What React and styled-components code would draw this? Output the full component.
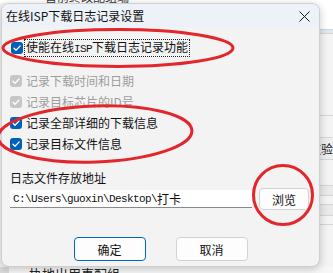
import styled, { createGlobalStyle } from 'styled-components';

const GlobalStyle = createGlobalStyle`
  html, body {
    margin: 0;
    padding: 0;
  }
  body {
    font-family: "Noto Sans CJK SC", "Noto Sans", sans-serif;
    font-size: 12px;
    color: #1a1a1a;
  }
  * {
    box-sizing: border-box;
  }
`;

const CJK = '"Noto Sans CJK SC", "Noto Sans", sans-serif';
const MONO = '"Liberation Mono", "DejaVu Sans Mono", monospace';

const OPTIONS = [
  { id: 'time', label: '记录下载时间和日期', checked: true, disabled: true },
  { id: 'chip', label: '记录目标芯片的ID号', checked: true, disabled: true },
  { id: 'detail', label: '记录全部详细的下载信息', checked: true },
  { id: 'file', label: '记录目标文件信息', checked: true },
];

const SIDE_ROWS = [
  { h: 27, bg: '#ffffff' },
  { h: 4, bg: '#dfe7ef' },
  { h: 82, bg: '#f4f4f4' },
  { h: 22, bg: '#f4f4f4', text: 's)' },
  { h: 22, bg: '#eeeeee', text: '效验' },
  { h: 26, bg: '#f4f4f4' },
  { h: 10, bg: '#eaeaea' },
  { h: 9, bg: '#f4f4f4' },
  { h: 11, bg: '#eaeaea' },
  { h: 9, bg: '#f4f4f4' },
];

function Check({ disabled }) {
  return (
    <CheckBox $disabled={disabled}>
      <svg width="12" height="12" viewBox="0 0 12 12">
        <path
          d="M3 6.3 L5 8.3 L9.2 3.9"
          fill="none"
          stroke="#ffffff"
          strokeWidth="1.3"
          strokeLinecap="round"
          strokeLinejoin="round"
        />
      </svg>
    </CheckBox>
  );
}

export default function App() {
  return (
    <Screen>
      <GlobalStyle />

      <Backdrop>
        <TopStrip>
          <span>暂前终改配组端</span>
        </TopStrip>
        <Middle>
          <Spacer />
          <SideStrip>
            {SIDE_ROWS.map((row, i) => (
              <SideRow key={i} style={{ height: row.h, background: row.bg }}>
                {row.text}
              </SideRow>
            ))}
          </SideStrip>
        </Middle>
        <BottomStrip>
          <span>执地出用事配组</span>
        </BottomStrip>
      </Backdrop>

      <Dialog>
        <TitleBar>
          <Title>在线ISP下载日志记录设置</Title>
          <CloseButton>
            <svg width="11" height="11" viewBox="0 0 11 11">
              <path d="M0.5 0.5 L10.5 10.5 M10.5 0.5 L0.5 10.5" stroke="#1a1a1a" strokeWidth="1" />
            </svg>
          </CloseButton>
        </TitleBar>

        <Body>
          <MainRow>
            <Check />
            <FocusLabel>
              使能在线<Latin>ISP</Latin>下载日志记录功能
            </FocusLabel>
          </MainRow>

          <OptionList>
            {OPTIONS.map((opt) => (
              <OptionRow key={opt.id}>
                <Check disabled={opt.disabled} />
                <OptionLabel $disabled={opt.disabled}>{opt.label}</OptionLabel>
              </OptionRow>
            ))}
          </OptionList>

          <FieldLabel>日志文件存放地址</FieldLabel>
          <PathRow>
            <PathInput>
              <Latin>C:\Users\guoxin\Desktop\</Latin>打卡
            </PathInput>
            <Button $w={50} $h={22}>浏览</Button>
          </PathRow>

          <Footer>
            <Button $primary>确定</Button>
            <Button>取消</Button>
          </Footer>
        </Body>
      </Dialog>

      <Marks width="333" height="273" viewBox="0 0 333 273">
        <ellipse cx="118" cy="48" rx="115" ry="18.5" fill="none" stroke="#e3262b" strokeWidth="3" />
        <ellipse
          cx="95"
          cy="134"
          rx="97"
          ry="28"
          fill="none"
          stroke="#e3262b"
          strokeWidth="3"
          transform="rotate(-2 95 134)"
        />
        <ellipse cx="283" cy="195" rx="29.5" ry="29.5" fill="none" stroke="#e3262b" strokeWidth="3" />
      </Marks>
    </Screen>
  );
}

const Screen = styled.div`
  position: relative;
  width: 333px;
  height: 273px;
  overflow: hidden;
  background: #f4f4f4;
`;

const Backdrop = styled.div`
  display: flex;
  flex-direction: column;
  width: 333px;
  height: 273px;
`;

const TopStrip = styled.div`
  height: 3px;
  overflow: hidden;
  background: #ffffff;
  padding-left: 45px;

  span {
    display: block;
    margin-top: -9px;
    line-height: 12px;
    font-size: 12px;
    color: #333333;
  }
`;

const Middle = styled.div`
  flex: 1;
  display: flex;
`;

const Spacer = styled.div`
  width: 320px;
`;

const SideStrip = styled.div`
  flex: 1;
  display: flex;
  flex-direction: column;
`;

const SideRow = styled.div`
  display: flex;
  align-items: center;
  border-bottom: 1px solid #d6d6d6;
  font-size: 12px;
  white-space: nowrap;
  color: #222222;
  overflow: hidden;
`;

const BottomStrip = styled.div`
  height: 6px;
  overflow: hidden;
  background: #f7f7f7;
  padding-left: 20px;
  border-left: 9px solid #dadada;

  span {
    display: block;
    line-height: 14px;
    font-size: 13px;
    color: #222222;
  }
`;

const Dialog = styled.div`
  position: absolute;
  left: 1px;
  top: 3px;
  width: 319px;
  height: 264px;
  display: flex;
  flex-direction: column;
  background: #f3f3f3;
  border: 1px solid #cfcfcf;
  border-radius: 8px;
  overflow: hidden;
  box-shadow: 0 2px 8px rgba(0, 0, 0, 0.22);
`;

const TitleBar = styled.div`
  height: 23px;
  display: flex;
  align-items: center;
  justify-content: space-between;
  padding: 0 9px 0 4px;
  background: #edf2f9;
`;

const Title = styled.div`
  font-family: ${CJK};
  font-size: 12px;
  line-height: 16px;
  color: #111111;
`;

const CloseButton = styled.div`
  display: flex;
  align-items: center;
  margin-top: 2px;
`;

const Body = styled.div`
  display: flex;
  flex-direction: column;
  padding: 10px 8px 0 8px;
`;

const MainRow = styled.div`
  height: 21px;
  display: flex;
  align-items: center;
  gap: 2px;
  padding-left: 1px;
`;

const CheckBox = styled.div`
  width: 12px;
  height: 12px;
  flex: none;
  border-radius: 3px;
  display: flex;
  align-items: center;
  justify-content: center;
  background: ${({ $disabled }) => ($disabled ? '#c6c6c6' : '#005fb8')};
`;

const FocusLabel = styled.div`
  font-family: ${CJK};
  font-size: 12px;
  line-height: 13px;
  padding: 0 1px;
  color: #111111;
  outline: 1px dotted #222222;
`;

const Latin = styled.span`
  font-family: ${MONO};
  font-size: 11px;
  letter-spacing: -0.6px;
`;

const OptionList = styled.div`
  display: flex;
  flex-direction: column;
  margin-top: 12px;
`;

const OptionRow = styled.div`
  height: 21px;
  display: flex;
  align-items: center;
  gap: 4px;
`;

const OptionLabel = styled.div`
  font-family: ${CJK};
  font-size: 12px;
  line-height: 16px;
  color: ${({ $disabled }) => ($disabled ? '#9d9d9d' : '#111111')};
`;

const FieldLabel = styled.div`
  margin-top: 16px;
  font-family: ${CJK};
  font-size: 12px;
  line-height: 16px;
  color: #111111;
`;

const PathRow = styled.div`
  margin-top: 2px;
  display: flex;
  align-items: center;
  gap: 7px;
`;

const PathInput = styled.div`
  width: 242px;
  height: 18px;
  display: flex;
  align-items: center;
  padding-left: 3px;
  background: #ffffff;
  border-bottom: 1px solid #8a8a8a;
  border-radius: 2px 2px 0 0;
  font-family: ${CJK};
  font-size: 12px;
  color: #111111;
  white-space: nowrap;
`;

const Button = styled.div`
  width: ${({ $w }) => $w || 72}px;
  height: ${({ $h }) => $h || 24}px;
  display: flex;
  align-items: center;
  justify-content: center;
  background: #fdfdfd;
  border: ${({ $primary }) => ($primary ? '1.5px solid #0067c0' : '1px solid #d2d2d2')};
  border-radius: 4px;
  font-family: ${CJK};
  font-size: 12px;
  color: #111111;
`;

const Footer = styled.div`
  margin-top: 27px;
  display: flex;
  justify-content: center;
  gap: 30px;
`;

const Marks = styled.svg`
  position: absolute;
  left: 0;
  top: 0;
  pointer-events: none;
`;
